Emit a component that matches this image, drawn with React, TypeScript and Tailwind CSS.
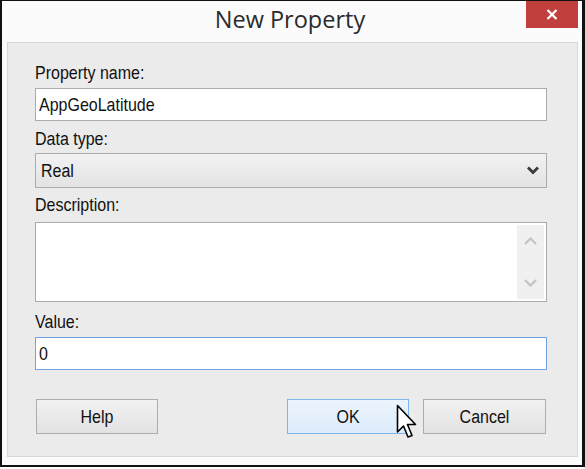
const tall = "inline-block scale-y-[1.18]";

export default function App() {
  const ui = { fontFamily: '"Liberation Sans", Arial, sans-serif' };
  return (
    <div className="w-[585px] h-[469px] bg-white" style={ui}>
      <div className="relative h-[467px] flex flex-col bg-[#fbfbfb] border-l-2 border-t border-r-[3px] border-b-2 border-[#111]">
        {/* title bar */}
        <div className="h-[41px] flex items-start justify-center pt-[3px]">
          <span
            className="text-[23.5px] leading-[30px] text-[#2b2b2b] pr-[4px]"
            style={{ fontFamily: '"Open Sans", "Noto Sans", sans-serif' }}
          >
            New Property
          </span>
        </div>
        <div className="absolute top-0 right-[4px] w-[52px] h-[27px] bg-[#c1403e] flex items-center justify-center">
          <svg width="12" height="11" viewBox="0 0 12 11">
            <path d="M1.5 1 L10.5 10 M10.5 1 L1.5 10" stroke="#fff" strokeWidth="2.2" />
          </svg>
        </div>

        {/* client area */}
        <div className="ml-[5px] mr-[4px] h-[415px] border border-[#d8d8d8] bg-[#ebebeb] pl-[27px] pr-[30px] pt-[21px] flex flex-col text-[16px] text-[#111]">
          <div className="leading-[18px] h-[18px]">
            <span className={tall}>Property name:</span>
          </div>
          <div className="mt-[6px] h-[33px] border border-[#acacac] bg-white flex items-center pl-[3px] leading-[18px]">
            <span className={tall}>AppGeoLatitude</span>
          </div>

          <div className="mt-[9px] leading-[18px] h-[18px]">
            <span className={tall}>Data type:</span>
          </div>
          <div className="mt-[5px] h-[35px] border border-[#acacac] bg-gradient-to-b from-[#f2f2f2] to-[#e3e3e3] flex items-center justify-between pl-[5px] pr-[7px]">
            <span className={`${tall} leading-[18px]`}>Real</span>
            <svg width="12" height="9" viewBox="0 0 12 9">
              <path d="M1 1.5 L6 6.5 L11 1.5" fill="none" stroke="#3a3a3a" strokeWidth="2.8" />
            </svg>
          </div>

          <div className="mt-[8px] leading-[18px] h-[18px]">
            <span className={tall}>Description:</span>
          </div>
          <div className="mt-[8px] h-[80px] border border-[#acacac] bg-white flex justify-end p-[2px]">
            <div className="w-[27px] h-full bg-[#f0f0f0] flex flex-col items-center justify-between py-[12px]">
              <svg width="13" height="8" viewBox="0 0 13 8">
                <path d="M1 7 L6.5 1.5 L12 7" fill="none" stroke="#c3c3c3" strokeWidth="2.2" />
              </svg>
              <svg width="13" height="8" viewBox="0 0 13 8">
                <path d="M1 1 L6.5 6.5 L12 1" fill="none" stroke="#c3c3c3" strokeWidth="2.2" />
              </svg>
            </div>
          </div>

          <div className="mt-[11px] leading-[18px] h-[18px]">
            <span className={tall}>Value:</span>
          </div>
          <div className="mt-[6px] h-[33px] border border-[#6ea4e0] bg-white flex items-center pl-[3px] leading-[18px]">
            <span className={tall}>0</span>
          </div>

          <div className="mt-[29px] flex justify-between pl-px pr-px">
            <button className="w-[122px] h-[35px] border border-[#adadad] bg-gradient-to-b from-[#f2f2f2] to-[#e2e2e2] leading-[18px]">
              <span className={tall}>Help</span>
            </button>
            <div className="flex gap-[14px]">
              <button className="w-[122px] h-[35px] border border-[#7eb4ea] bg-gradient-to-b from-[#ecf4fc] to-[#dcecfc] leading-[18px]">
                <span className={tall}>OK</span>
              </button>
              <button className="w-[123px] h-[35px] border border-[#adadad] bg-gradient-to-b from-[#f2f2f2] to-[#e2e2e2] leading-[18px]">
                <span className={tall}>Cancel</span>
              </button>
            </div>
          </div>
        </div>

        {/* mouse pointer */}
        <svg
          className="absolute left-[394px] top-[403px]"
          width="22"
          height="42"
          viewBox="0 0 22 42"
        >
          <path
            d="M1.5 1.5 L1.5 28 L7.5 22 L12 33 L16 31.5 L11.5 20.5 L19.5 20.5 Z"
            fill="#fff"
            stroke="#000"
            strokeWidth="1.6"
            strokeLinejoin="round"
          />
        </svg>
      </div>
    </div>
  );
}
